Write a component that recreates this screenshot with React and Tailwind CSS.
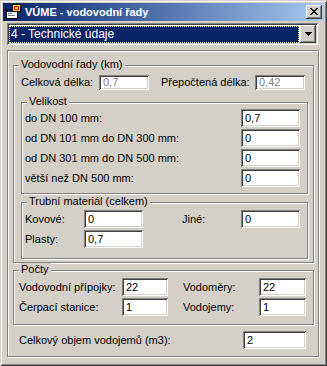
import React from "react";

const sunken =
  "bg-white shadow-[inset_1px_1px_0_#808080,inset_-1px_-1px_0_#ffffff,inset_2px_2px_0_#404040,inset_-2px_-2px_0_#d4d0c8] flex items-center pl-[4px] leading-none";
const raised =
  "bg-[#d4d0c8] shadow-[inset_-1px_-1px_0_#404040,inset_1px_1px_0_#ffffff,inset_-2px_-2px_0_#808080,inset_2px_2px_0_#d4d0c8]";
const etched =
  "relative border border-[#808080] shadow-[1px_1px_0_#ffffff,inset_1px_1px_0_#ffffff]";

function Legend({ children }) {
  return (
    <span className="absolute -top-[8px] left-[5px] px-[2px] bg-[#d4d0c8] leading-[13px]">
      {children}
    </span>
  );
}

function TitleIcon() {
  return (
    <svg width="16" height="16" viewBox="0 0 16 16" shapeRendering="crispEdges">
      <rect x="0.5" y="5.5" width="11" height="9" fill="#ffffff" stroke="#000000" />
      <rect x="1" y="6" width="10" height="2" fill="#0a246a" />
      <rect x="2" y="9" width="4" height="1" fill="#808080" />
      <rect x="2" y="11" width="7" height="1" fill="#808080" />
      <rect x="6.5" y="0.5" width="8" height="7" fill="#ffff00" stroke="#000000" />
      <rect x="8" y="2" width="5" height="4" fill="#ff0000" />
      <rect x="9" y="3" width="3" height="2" fill="#ffff00" />
    </svg>
  );
}

function CloseGlyph() {
  const rows = [
    [3, [[4, 2], [10, 2]]],
    [4, [[5, 2], [9, 2]]],
    [5, [[6, 4]]],
    [6, [[7, 2]]],
    [7, [[6, 4]]],
    [8, [[5, 2], [9, 2]]],
    [9, [[4, 2], [10, 2]]],
  ];
  return (
    <svg width="16" height="14" viewBox="0 0 16 14" shapeRendering="crispEdges">
      {rows.map(([y, segs]) =>
        segs.map(([x, w]) => (
          <rect key={`${y}-${x}`} x={x} y={y} width={w} height="1" fill="#000" />
        ))
      )}
    </svg>
  );
}

function DownArrow() {
  return (
    <svg width="7" height="4" viewBox="0 0 7 4" shapeRendering="crispEdges">
      <rect x="0" y="0" width="7" height="1" fill="#000" />
      <rect x="1" y="1" width="5" height="1" fill="#000" />
      <rect x="2" y="2" width="3" height="1" fill="#000" />
      <rect x="3" y="3" width="1" height="1" fill="#000" />
    </svg>
  );
}

export default function App() {
  return (
    <div
      className="w-[327px] h-[366px] bg-[#d4d0c8] p-[3px] text-[11px] text-black shadow-[inset_1px_1px_0_#d4d0c8,inset_-1px_-1px_0_#404040,inset_2px_2px_0_#ffffff,inset_-2px_-2px_0_#808080] select-none"
      style={{ fontFamily: '"Liberation Sans", Arial, sans-serif' }}
    >
      {/* Title bar */}
      <div className="h-[18px] flex items-center bg-gradient-to-r from-[#0a246a] to-[#a6caf0] pl-[3px] pr-[2px]">
        <TitleIcon />
        <span className="ml-[3px] text-white font-bold text-[11px] leading-none">
          VÚME - vodovodní řady
        </span>
        <div className={`ml-auto w-[16px] h-[14px] ${raised}`}>
          <CloseGlyph />
        </div>
      </div>

      {/* Combo */}
      <div className={`mt-[2px] ml-[4px] w-[311px] h-[22px] ${sunken} !pl-[2px] !pr-[2px] gap-[1px]`}>
        <div className="flex-1 h-[17px] bg-[#0a246a] border border-dotted border-[#ffff99] flex items-center pl-[1px] text-white text-[12px]">
          4 - Technické údaje
        </div>
        <div className={`w-[16px] h-[18px] ${raised} flex items-center justify-center`}>
          <DownArrow />
        </div>
      </div>

      {/* Panel */}
      <div className={`mt-[5px] ml-[4px] w-[312px] h-[307px] ${etched}`}>
        <div className={`mt-[14px] ml-[5px] w-[301px] h-[198px] ${etched}`}>
          <Legend>Vodovodní řady (km)</Legend>
          <div className="mt-[9px] pl-[7px] h-[15px] flex items-center">
            <span className="w-[78px]">Celková délka:</span>
            <div className={`w-[50px] h-[15px] ${sunken} text-[#808080]`}>0,7</div>
            <span className="ml-[12px] w-[94px]">Přepočtená délka:</span>
            <div className={`w-[50px] h-[15px] ${sunken} text-[#808080]`}>0,42</div>
          </div>

          <div className={`mt-[12px] ml-[7px] w-[287px] h-[92px] ${etched} pt-[6px] pl-[3px] pr-[7px] flex flex-col gap-[2px]`}>
            <Legend>Velikost</Legend>
            {[
              ["do DN 100 mm:", "0,7"],
              ["od DN 101 mm do DN 300 mm:", "0"],
              ["od DN 301 mm do DN 500 mm:", "0"],
              ["větší než DN 500 mm:", "0"],
            ].map(([label, value]) => (
              <div key={label} className="h-[18px] flex items-center justify-between">
                <span>{label}</span>
                <div className={`w-[59px] h-[18px] ${sunken}`}>{value}</div>
              </div>
            ))}
          </div>

          <div className={`mt-[8px] ml-[7px] w-[287px] h-[57px] ${etched} pt-[7px] pl-[3px] flex flex-col gap-[2px]`}>
            <Legend>Trubní materiál (celkem)</Legend>
            <div className="h-[18px] flex items-center">
              <span className="w-[59px]">Kovové:</span>
              <div className={`w-[59px] h-[18px] ${sunken}`}>0</div>
              <span className="ml-[39px] w-[59px]">Jiné:</span>
              <div className={`w-[59px] h-[18px] ${sunken}`}>0</div>
            </div>
            <div className="h-[18px] flex items-center">
              <span className="w-[59px]">Plasty:</span>
              <div className={`w-[59px] h-[18px] ${sunken}`}>0,7</div>
            </div>
          </div>
        </div>

        <div className={`mt-[7px] ml-[5px] w-[301px] h-[55px] ${etched} pt-[7px] pl-[5px] flex flex-col gap-[2px]`}>
          <Legend>Počty</Legend>
          <div className="h-[18px] flex items-center">
            <span className="w-[103px]">Vodovodní přípojky:</span>
            <div className={`w-[46px] h-[18px] ${sunken}`}>22</div>
            <span className="ml-[15px] w-[76px]">Vodoměry:</span>
            <div className={`w-[47px] h-[18px] ${sunken}`}>22</div>
          </div>
          <div className="h-[18px] flex items-center">
            <span className="w-[103px]">Čerpací stanice:</span>
            <div className={`w-[46px] h-[18px] ${sunken}`}>1</div>
            <span className="ml-[15px] w-[76px]">Vodojemy:</span>
            <div className={`w-[47px] h-[18px] ${sunken}`}>1</div>
          </div>
        </div>

        <div className="mt-[6px] ml-[11px] h-[18px] flex items-center">
          <span className="w-[224px]">Celkový objem vodojemů (m3):</span>
          <div className={`w-[63px] h-[18px] ${sunken}`}>2</div>
        </div>
      </div>
    </div>
  );
}
